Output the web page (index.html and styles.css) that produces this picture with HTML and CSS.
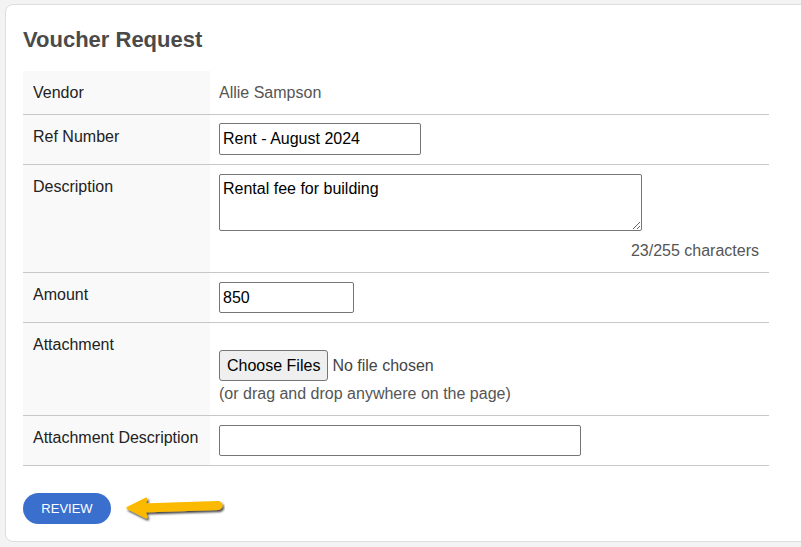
FILE: index.html
```html
<!DOCTYPE html>
<html lang="en">
<head>
    <meta charset="UTF-8">
    <meta name="viewport" content="width=device-width, initial-scale=1.0">
    <title>Voucher Request</title>
    <link rel="stylesheet" href="styles.css">
</head>
<body>
    <div class="tarjeta">
        <h1>Voucher Request</h1>
        <table class="formulario">
            <tr>
                <td class="etiqueta">Vendor</td>
                <td class="valor"><span class="texto">Allie Sampson</span></td>
            </tr>
            <tr>
                <td class="etiqueta">Ref Number</td>
                <td class="valor"><input type="text" class="campo campo-ref" value="Rent - August 2024"></td>
            </tr>
            <tr>
                <td class="etiqueta">Description</td>
                <td class="valor">
                    <textarea class="area">Rental fee for building</textarea>
                    <div class="contador">23/255 characters</div>
                </td>
            </tr>
            <tr>
                <td class="etiqueta">Amount</td>
                <td class="valor"><input type="text" class="campo campo-monto" value="850"></td>
            </tr>
            <tr>
                <td class="etiqueta">Attachment</td>
                <td class="valor">
                    <div class="archivo">
                        <button type="button" class="boton-archivo">Choose Files</button>
                        <span class="sin-archivo">No file chosen</span>
                    </div>
                    <div class="ayuda">(or drag and drop anywhere on the page)</div>
                </td>
            </tr>
            <tr>
                <td class="etiqueta">Attachment Description</td>
                <td class="valor"><input type="text" class="campo campo-adjunto"></td>
            </tr>
        </table>
        <div class="acciones">
            <button type="button" class="boton-review">REVIEW</button>
            <svg class="flecha" width="100" height="28" viewBox="0 0 100 28">
                <defs>
                    <filter id="sombra" x="-10%" y="-30%" width="130%" height="180%">
                        <feDropShadow dx="1.5" dy="2" stdDeviation="1" flood-color="#000" flood-opacity="0.75"/>
                    </filter>
                </defs>
                <g filter="url(#sombra)" fill="#fbb900" stroke="#fbb900">
                    <line x1="17" y1="13" x2="93" y2="10.5" stroke-width="9" stroke-linecap="round"/>
                    <polygon points="3,13 21,4 18,13 21,22" stroke-width="3" stroke-linejoin="round"/>
                </g>
            </svg>
        </div>
    </div>
</body>
</html>
```

FILE: styles.css
```css
html, body {
    overflow: hidden;
}

body {
    background-color: #f3f3f3;
    color: #222;
    font-family: "Liberation Sans", Arial, sans-serif;
    font-size: 16px;
    margin: 0;
    padding: 0;
}

.tarjeta {
    margin: 4px 0 0 5px;
    width: 830px;
    height: 538px;
    box-sizing: border-box;
    background-color: white;
    border: 1px solid #dedede;
    border-radius: 8px;
    padding: 22px 17px 0 17px;
}

h1 {
    color: #4a4a4a;
    font-size: 22px;
    line-height: 25px;
    font-weight: bold;
    margin: 0 0 19px 0;
}

.formulario {
    width: 746px;
    border-collapse: collapse;
}

.formulario tr {
    border-bottom: 1px solid #c8c8c8;
}

.formulario td {
    vertical-align: top;
    line-height: 18px;
}

.etiqueta {
    width: 167px;
    background-color: #f9f9f9;
    padding: 13px 10px 12px 10px;
}

.valor {
    padding: 8px 10px 9px 9px;
    color: #555;
}

.texto {
    display: block;
    padding-top: 5px;
}

.campo {
    display: block;
    box-sizing: border-box;
    height: 32px;
    border: 1px solid #767676;
    border-radius: 2px;
    padding: 0 3px;
    font-family: inherit;
    font-size: 16px;
    color: #000;
    margin: 0;
}

.campo-ref {
    width: 202px;
}

.campo-monto {
    width: 135px;
    height: 31px;
    margin-top: 1px;
}

.campo-adjunto {
    width: 362px;
    height: 31px;
    margin-top: 1px;
}

.area {
    display: block;
    box-sizing: border-box;
    width: 423px;
    height: 57px;
    margin: 1px 0 0 0;
    border: 1px solid #767676;
    border-radius: 2px;
    padding: 5px 3px 4px 3px;
    font-family: inherit;
    font-size: 16px;
    line-height: 18px;
    color: #000;
    resize: vertical;
}

.contador {
    text-align: right;
    margin-top: 11px;
    margin-bottom: 3px;
}

.archivo {
    display: flex;
    align-items: center;
    gap: 4px;
    margin-top: 19px;
}

.boton-archivo {
    box-sizing: border-box;
    height: 31px;
    padding: 0 7px;
    background-color: #efefef;
    border: 1px solid #767676;
    border-radius: 3px;
    font-family: inherit;
    font-size: 16px;
    color: #000;
}

.sin-archivo {
    color: #444;
}

.ayuda {
    margin-top: 4px;
    margin-bottom: 3px;
}

.acciones {
    display: flex;
    align-items: center;
    gap: 14px;
    margin-top: 27px;
}

.boton-review {
    width: 88px;
    height: 31px;
    background-color: #3b6fce;
    color: white;
    border: none;
    border-radius: 16px;
    font-family: inherit;
    font-size: 13px;
    padding: 0;
    cursor: pointer;
}

.flecha {
    display: block;
}
```
